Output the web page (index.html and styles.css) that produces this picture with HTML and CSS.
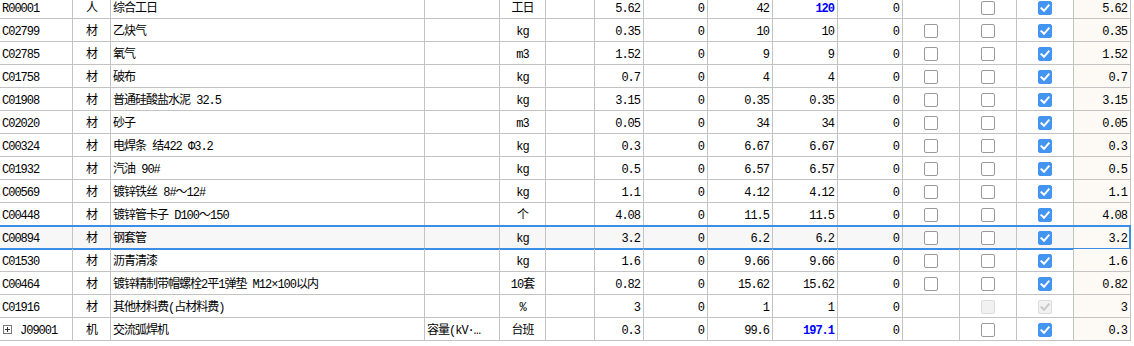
FILE: index.html
```html
<!DOCTYPE html>
<html lang="zh-CN">
<head>
<meta charset="utf-8">
<title>材料明细</title>
<link rel="stylesheet" href="styles.css">
</head>
<body>
<div class="grid">
  <div class="row">
    <div class="c l">R00001</div><div class="c ctr">人</div><div class="c l">综合工日</div><div class="c l"></div><div class="c ctr">工日</div><div class="c"></div><div class="c r">5.62</div><div class="c r">0</div><div class="c r">42</div><div class="c r hi">120</div><div class="c r">0</div><div class="c ctr"></div><div class="c ctr"><span class="cb"></span></div><div class="c ctr"><span class="cb on"><svg viewBox="0 0 14 14"><path d="M3.4 7.3 6 9.8 10.7 4.3"/></svg></span></div><div class="c r last">5.62</div>
  </div>
  <div class="row">
    <div class="c l">C02799</div><div class="c ctr">材</div><div class="c l">乙炔气</div><div class="c l"></div><div class="c ctr">kg</div><div class="c"></div><div class="c r">0.35</div><div class="c r">0</div><div class="c r">10</div><div class="c r">10</div><div class="c r">0</div><div class="c ctr"><span class="cb"></span></div><div class="c ctr"><span class="cb"></span></div><div class="c ctr"><span class="cb on"><svg viewBox="0 0 14 14"><path d="M3.4 7.3 6 9.8 10.7 4.3"/></svg></span></div><div class="c r last">0.35</div>
  </div>
  <div class="row">
    <div class="c l">C02785</div><div class="c ctr">材</div><div class="c l">氧气</div><div class="c l"></div><div class="c ctr">m3</div><div class="c"></div><div class="c r">1.52</div><div class="c r">0</div><div class="c r">9</div><div class="c r">9</div><div class="c r">0</div><div class="c ctr"><span class="cb"></span></div><div class="c ctr"><span class="cb"></span></div><div class="c ctr"><span class="cb on"><svg viewBox="0 0 14 14"><path d="M3.4 7.3 6 9.8 10.7 4.3"/></svg></span></div><div class="c r last">1.52</div>
  </div>
  <div class="row">
    <div class="c l">C01758</div><div class="c ctr">材</div><div class="c l">破布</div><div class="c l"></div><div class="c ctr">kg</div><div class="c"></div><div class="c r">0.7</div><div class="c r">0</div><div class="c r">4</div><div class="c r">4</div><div class="c r">0</div><div class="c ctr"><span class="cb"></span></div><div class="c ctr"><span class="cb"></span></div><div class="c ctr"><span class="cb on"><svg viewBox="0 0 14 14"><path d="M3.4 7.3 6 9.8 10.7 4.3"/></svg></span></div><div class="c r last">0.7</div>
  </div>
  <div class="row">
    <div class="c l">C01908</div><div class="c ctr">材</div><div class="c l">普通硅酸盐水泥 32.5</div><div class="c l"></div><div class="c ctr">kg</div><div class="c"></div><div class="c r">3.15</div><div class="c r">0</div><div class="c r">0.35</div><div class="c r">0.35</div><div class="c r">0</div><div class="c ctr"><span class="cb"></span></div><div class="c ctr"><span class="cb"></span></div><div class="c ctr"><span class="cb on"><svg viewBox="0 0 14 14"><path d="M3.4 7.3 6 9.8 10.7 4.3"/></svg></span></div><div class="c r last">3.15</div>
  </div>
  <div class="row">
    <div class="c l">C02020</div><div class="c ctr">材</div><div class="c l">砂子</div><div class="c l"></div><div class="c ctr">m3</div><div class="c"></div><div class="c r">0.05</div><div class="c r">0</div><div class="c r">34</div><div class="c r">34</div><div class="c r">0</div><div class="c ctr"><span class="cb"></span></div><div class="c ctr"><span class="cb"></span></div><div class="c ctr"><span class="cb on"><svg viewBox="0 0 14 14"><path d="M3.4 7.3 6 9.8 10.7 4.3"/></svg></span></div><div class="c r last">0.05</div>
  </div>
  <div class="row">
    <div class="c l">C00324</div><div class="c ctr">材</div><div class="c l">电焊条 结422 Φ3.2</div><div class="c l"></div><div class="c ctr">kg</div><div class="c"></div><div class="c r">0.3</div><div class="c r">0</div><div class="c r">6.67</div><div class="c r">6.67</div><div class="c r">0</div><div class="c ctr"><span class="cb"></span></div><div class="c ctr"><span class="cb"></span></div><div class="c ctr"><span class="cb on"><svg viewBox="0 0 14 14"><path d="M3.4 7.3 6 9.8 10.7 4.3"/></svg></span></div><div class="c r last">0.3</div>
  </div>
  <div class="row">
    <div class="c l">C01932</div><div class="c ctr">材</div><div class="c l">汽油 90#</div><div class="c l"></div><div class="c ctr">kg</div><div class="c"></div><div class="c r">0.5</div><div class="c r">0</div><div class="c r">6.57</div><div class="c r">6.57</div><div class="c r">0</div><div class="c ctr"><span class="cb"></span></div><div class="c ctr"><span class="cb"></span></div><div class="c ctr"><span class="cb on"><svg viewBox="0 0 14 14"><path d="M3.4 7.3 6 9.8 10.7 4.3"/></svg></span></div><div class="c r last">0.5</div>
  </div>
  <div class="row">
    <div class="c l">C00569</div><div class="c ctr">材</div><div class="c l">镀锌铁丝 8#～12#</div><div class="c l"></div><div class="c ctr">kg</div><div class="c"></div><div class="c r">1.1</div><div class="c r">0</div><div class="c r">4.12</div><div class="c r">4.12</div><div class="c r">0</div><div class="c ctr"><span class="cb"></span></div><div class="c ctr"><span class="cb"></span></div><div class="c ctr"><span class="cb on"><svg viewBox="0 0 14 14"><path d="M3.4 7.3 6 9.8 10.7 4.3"/></svg></span></div><div class="c r last">1.1</div>
  </div>
  <div class="row">
    <div class="c l">C00448</div><div class="c ctr">材</div><div class="c l">镀锌管卡子 D100～150</div><div class="c l"></div><div class="c ctr">个</div><div class="c"></div><div class="c r">4.08</div><div class="c r">0</div><div class="c r">11.5</div><div class="c r">11.5</div><div class="c r">0</div><div class="c ctr"><span class="cb"></span></div><div class="c ctr"><span class="cb"></span></div><div class="c ctr"><span class="cb on"><svg viewBox="0 0 14 14"><path d="M3.4 7.3 6 9.8 10.7 4.3"/></svg></span></div><div class="c r last">4.08</div>
  </div>
  <div class="row sel">
    <div class="c l">C00894</div><div class="c ctr">材</div><div class="c l">钢套管</div><div class="c l"></div><div class="c ctr">kg</div><div class="c"></div><div class="c r">3.2</div><div class="c r">0</div><div class="c r">6.2</div><div class="c r">6.2</div><div class="c r">0</div><div class="c ctr"><span class="cb"></span></div><div class="c ctr"><span class="cb"></span></div><div class="c ctr"><span class="cb on"><svg viewBox="0 0 14 14"><path d="M3.4 7.3 6 9.8 10.7 4.3"/></svg></span></div><div class="c r last">3.2</div>
  </div>
  <div class="row">
    <div class="c l">C01530</div><div class="c ctr">材</div><div class="c l">沥青清漆</div><div class="c l"></div><div class="c ctr">kg</div><div class="c"></div><div class="c r">1.6</div><div class="c r">0</div><div class="c r">9.66</div><div class="c r">9.66</div><div class="c r">0</div><div class="c ctr"><span class="cb"></span></div><div class="c ctr"><span class="cb"></span></div><div class="c ctr"><span class="cb on"><svg viewBox="0 0 14 14"><path d="M3.4 7.3 6 9.8 10.7 4.3"/></svg></span></div><div class="c r last">1.6</div>
  </div>
  <div class="row">
    <div class="c l">C00464</div><div class="c ctr">材</div><div class="c l">镀锌精制带帽螺栓2平1弹垫 M12×100以内</div><div class="c l"></div><div class="c ctr">10套</div><div class="c"></div><div class="c r">0.82</div><div class="c r">0</div><div class="c r">15.62</div><div class="c r">15.62</div><div class="c r">0</div><div class="c ctr"><span class="cb"></span></div><div class="c ctr"><span class="cb"></span></div><div class="c ctr"><span class="cb on"><svg viewBox="0 0 14 14"><path d="M3.4 7.3 6 9.8 10.7 4.3"/></svg></span></div><div class="c r last">0.82</div>
  </div>
  <div class="row">
    <div class="c l">C01916</div><div class="c ctr">材</div><div class="c l">其他材料费(占材料费)</div><div class="c l"></div><div class="c ctr">%</div><div class="c"></div><div class="c r">3</div><div class="c r">0</div><div class="c r">1</div><div class="c r">1</div><div class="c r">0</div><div class="c ctr"></div><div class="c ctr"><span class="cb dis"></span></div><div class="c ctr"><span class="cb dis on"><svg viewBox="0 0 14 14"><path d="M3.4 7.3 6 9.8 10.7 4.3"/></svg></span></div><div class="c r last">3</div>
  </div>
  <div class="row">
    <div class="c l"><span class="tog"><svg viewBox="0 0 9 9"><path d="M2 4.5h5M4.5 2v5"/></svg></span>J09001</div><div class="c ctr">机</div><div class="c l">交流弧焊机</div><div class="c l">容量(kV·…</div><div class="c ctr">台班</div><div class="c"></div><div class="c r">0.3</div><div class="c r">0</div><div class="c r">99.6</div><div class="c r hi">197.1</div><div class="c r">0</div><div class="c ctr"></div><div class="c ctr"><span class="cb"></span></div><div class="c ctr"><span class="cb on"><svg viewBox="0 0 14 14"><path d="M3.4 7.3 6 9.8 10.7 4.3"/></svg></span></div><div class="c r last">0.3</div>
  </div>
</div>
</body>
</html>
```

FILE: styles.css
```css
html, body {
  margin: 0;
  padding: 0;
  background: #ffffff;
}

body {
  font-family: "Liberation Mono", "Noto Sans CJK SC", monospace;
  font-size: 12px;
  letter-spacing: -1px;
  color: #000000;
  overflow: hidden;
}

.grid {
  margin-top: -4px;
  width: 1131px;
}

.row {
  position: relative;
  display: grid;
  grid-template-columns: 73px 38px 314px 75px 46px 49px 49px 64px 65px 65px 65px 57px 57px 57px 57px;
  height: 23px;
  box-sizing: border-box;
  border-bottom: 1px solid #c3c3c3;
}

.c {
  box-sizing: border-box;
  border-right: 1px solid #c3c3c3;
  display: flex;
  align-items: center;
  white-space: nowrap;
  overflow: hidden;
  line-height: 18px;
  padding-top: 4px;
  min-width: 0;
}

.l {
  justify-content: flex-start;
  padding-left: 2px;
}

.ctr {
  justify-content: center;
}

.r {
  justify-content: flex-end;
  padding-right: 3px;
}

.hi {
  color: #0000ff;
  font-weight: bold;
}

.last {
  background: #fdf9f4;
}

.sel {
  background: #f7f7f7;
}

.sel::after {
  content: "";
  position: absolute;
  left: -3px;
  right: 0;
  top: -1px;
  bottom: -2px;
  border: 2px solid #3b8de6;
  pointer-events: none;
}

.cb {
  width: 14px;
  height: 14px;
  box-sizing: border-box;
  border: 1px solid #9a9a9a;
  border-radius: 2px;
  background: #ffffff;
  display: block;
  margin-top: -3px;
}

.cb svg {
  display: block;
  width: 14px;
  height: 14px;
  margin: -1px;
}

.cb svg path {
  fill: none;
  stroke: #ffffff;
  stroke-width: 2;
  stroke-linecap: square;
}

.cb.on {
  background: #4494f2;
  border-color: #4494f2;
}

.cb.dis {
  background: #f1f1f1;
  border-color: #dcdcdc;
}

.cb.dis.on {
  background: #f1f1f1;
  border-color: #dcdcdc;
}

.cb.dis.on svg path {
  stroke: #c8c8c8;
}

.tog {
  width: 9px;
  height: 9px;
  box-sizing: border-box;
  border: 1px solid #7a7a7a;
  margin-left: 1px;
  margin-right: 8px;
  display: block;
  margin-top: -3px;
}

.tog svg {
  display: block;
  width: 9px;
  height: 9px;
  margin: -1px;
}

.tog svg path {
  stroke: #333333;
  stroke-width: 1;
  fill: none;
}
```
